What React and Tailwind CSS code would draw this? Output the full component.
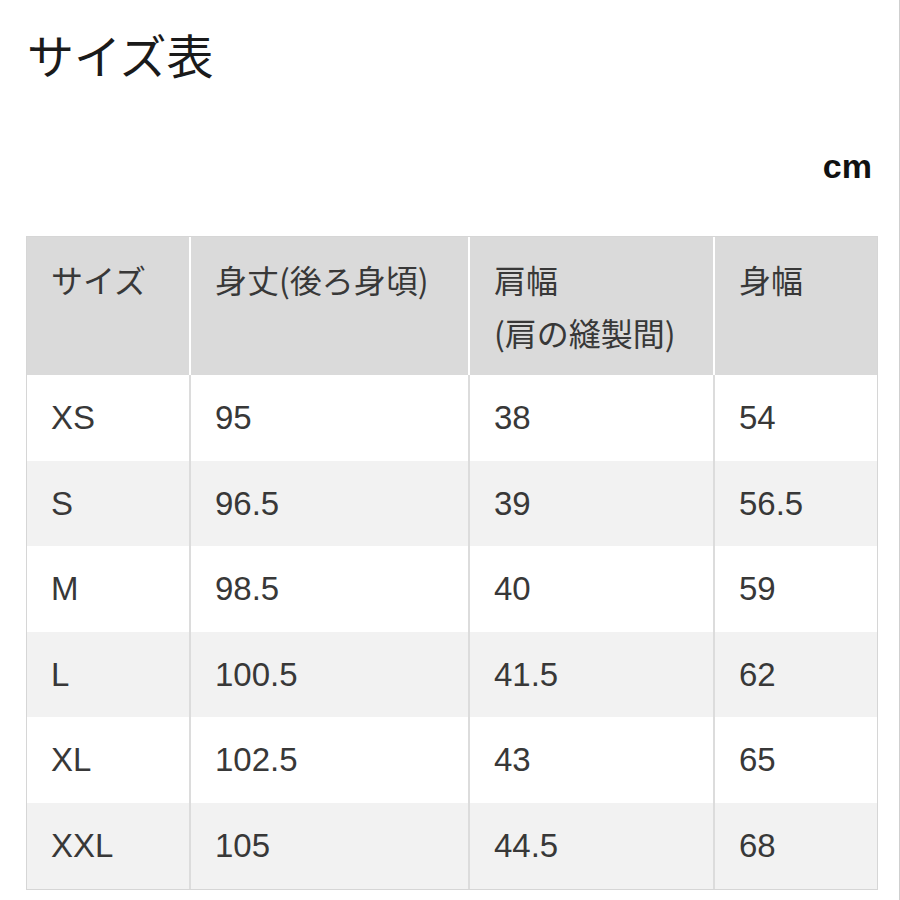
import React from "react";

const font = { fontFamily: '"Liberation Sans", "Noto Sans CJK JP", sans-serif' };

const rows = [
  ["XS", "95", "38", "54"],
  ["S", "96.5", "39", "56.5"],
  ["M", "98.5", "40", "59"],
  ["L", "100.5", "41.5", "62"],
  ["XL", "102.5", "43", "65"],
  ["XXL", "105", "44.5", "68"],
];

export default function App() {
  return (
    <div
      className="w-[900px] h-[900px] bg-white border-r border-[#cfcfcf] overflow-hidden"
      style={font}
    >
      <div className="pl-[27px] pt-[24px] text-[47px] leading-[60px] text-[#1a1a1a] font-['Noto_Sans_CJK_JP',sans-serif]">
        サイズ表
      </div>
      <div className="flex justify-end pr-[27px] mt-[62px] text-[34px] leading-[40px] font-bold text-[#111]">
        cm
      </div>
      <div className="mt-[50px] ml-[26px] w-[852px] border border-[#d6d6d6] text-[#383838] text-[33px]">
        <div className="grid grid-cols-[162px_279px_245px_164px] bg-[#dadada] h-[138px]">
          {["サイズ", "身丈(後ろ身頃)", "肩幅\n(肩の縫製間)", "身幅"].map((h, i) => (
            <div
              key={i}
              className={`pl-[24px] pt-[16px] leading-[53px] whitespace-pre-line font-['Noto_Sans_CJK_JP',sans-serif] text-[32px] ${i > 0 ? "border-l-2 border-white" : ""}`}
            >
              {h}
            </div>
          ))}
        </div>
        {rows.map((r, ri) => (
          <div
            key={ri}
            className={`grid grid-cols-[162px_279px_245px_164px] h-[85.6px] ${ri % 2 === 1 ? "bg-[#f2f2f2]" : "bg-white"}`}
          >
            {r.map((c, ci) => (
              <div
                key={ci}
                className={`flex items-center pl-[24px] ${ci > 0 ? "border-l-2 border-[#dcdcdc]" : ""}`}
              >
                {c}
              </div>
            ))}
          </div>
        ))}
      </div>
    </div>
  );
}
